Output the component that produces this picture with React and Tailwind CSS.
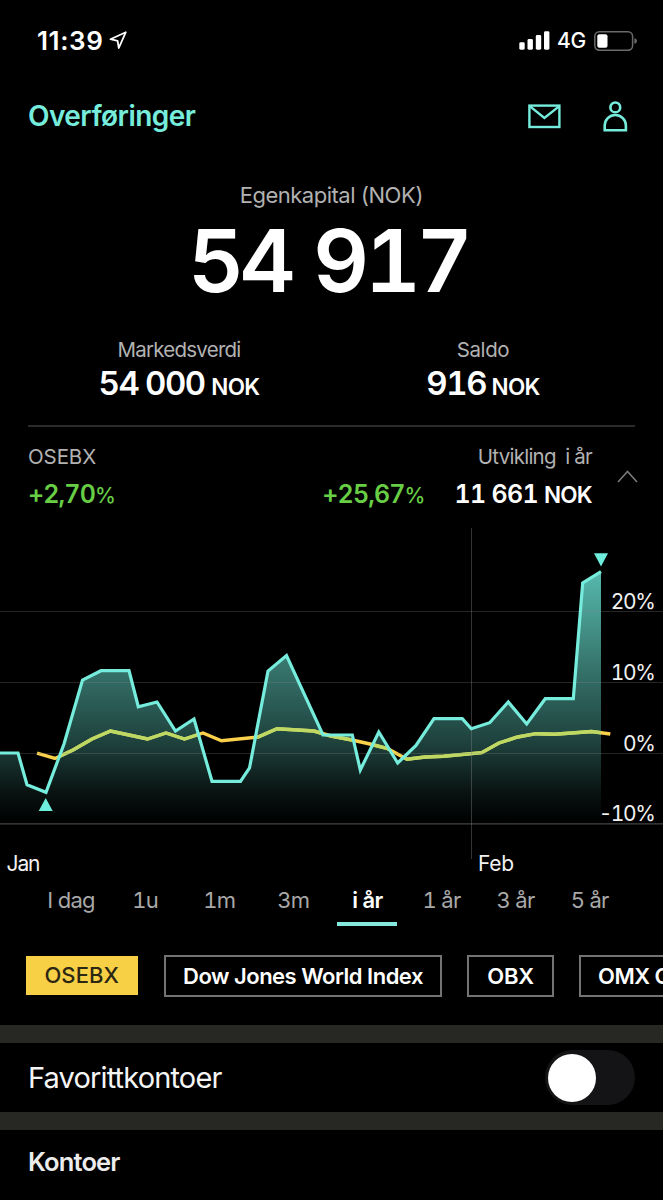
// src/App.jsx

const periods = ['I dag', '1u', '1m', '3m', 'i år', '1 år', '3 år', '5 år'];

// y = 0 is the top of the chart
const portfolio = [
  [-4, 233], [18, 233], [27, 264.7], [46, 272.3], [64, 224], [82.5, 160], [101, 150.7],
  [129, 150.7], [138.3, 186.7], [157, 182], [175.5, 211], [194, 199], [212, 261.3],
  [240.5, 261.3], [249.5, 248], [268, 151], [286.5, 135.5], [323, 215], [352.3, 215],
  [360.3, 250], [378.8, 212], [397.7, 243], [416, 225.5], [434, 198.7], [462.3, 198.7],
  [471.3, 208.7], [489.7, 202.7], [508.3, 182], [526.7, 204], [545.3, 178.7],
  [573.3, 178.7], [582.7, 63], [601, 51.7],
];

const osebx = [
  [37, 233.2], [55, 238.5], [73, 230], [92, 219], [110.5, 211], [129, 215], [147.5, 219],
  [166, 213], [184.5, 219], [203, 213], [221.5, 220.8], [258, 217], [277, 208.7],
  [314, 211], [331, 216], [352, 220], [370, 224], [387.7, 228.7], [407, 239.3],
  [425, 237], [443.7, 236.2], [481.7, 232.7], [499, 223], [517.7, 217], [536, 213.7],
  [554.7, 214.3], [591.7, 211.5], [610.3, 214],
];

const toPoints = (list) => list.map((p) => p.join(',')).join(' ');

function StatusBar() {
  return (
    <div className="flex h-[81px] items-center justify-between pl-[37px] pr-[26px]">
      <div className="flex items-center gap-[6px]">
        <span className="text-[26px] font-semibold tracking-[0.6px]">11:39</span>
        <svg width="18" height="19" viewBox="0 0 18 19" fill="none">
          <path d="M16.8 1.2 L1.4 8.2 L8.6 9.8 L9.8 17 Z" stroke="#fff" strokeWidth="1.8" strokeLinejoin="round" />
        </svg>
      </div>
      <div className="flex items-center">
        <svg width="31" height="19" viewBox="0 0 31 19" fill="#fff">
          <rect x="0.3" y="11.3" width="5.4" height="7.4" rx="1.4" />
          <rect x="8.5" y="8.1" width="5.4" height="10.6" rx="1.4" />
          <rect x="16.8" y="4.1" width="5.4" height="14.6" rx="1.4" />
          <rect x="25" y="0.2" width="5.4" height="18.5" rx="1.4" />
        </svg>
        <span className="ml-[7px] w-[30px] text-[21px] font-medium tracking-[-0.4px]">4G</span>
        <svg className="ml-[7px]" width="43" height="20" viewBox="0 0 43 20">
          <rect x="0.8" y="0.8" width="37.8" height="18.4" rx="4.6" fill="none" stroke="#6b6b6b" strokeWidth="1.5" />
          <rect x="3.3" y="3.3" width="10.2" height="13.4" rx="2" fill="#fff" />
          <path d="M40.4 7 Q43 8 43 10 Q43 12 40.4 13 Z" fill="#6b6b6b" />
        </svg>
      </div>
    </div>
  );
}

function Header() {
  return (
    <div className="flex h-[70px] items-center justify-between pl-[28px] pr-[35px] text-[#76ecdc]">
      <span className="text-[28px] font-semibold tracking-[-0.55px]">Overføringer</span>
      <div className="flex items-center gap-[42px]">
        <svg width="33" height="32" viewBox="0 0 33 32" fill="none" stroke="currentColor" strokeWidth="2.4">
          <rect x="1.4" y="5.6" width="30" height="21.4" />
          <path d="M2 6.4 L16.4 18 L31 6.4" />
        </svg>
        <svg width="25" height="32" viewBox="0 0 25 32" fill="none" stroke="currentColor" strokeWidth="2.6">
          <circle cx="12.3" cy="7.4" r="4.9" />
          <path d="M1.7 30.3 V25.6 A10.6 10.6 0 0 1 22.9 25.6 V30.3 Z" />
        </svg>
      </div>
    </div>
  );
}

function Balance() {
  return (
    <div className="flex flex-col px-[28px] [font-feature-settings:'tnum']">
      <div className="flex h-[89px] items-center justify-center text-[22px] tracking-[-0.5px] text-[#b2b2b2]">
        Egenkapital (NOK)
      </div>
      <div className="-mt-[22px] flex h-[87px] items-center justify-center pr-[7px] text-[87px] font-semibold tracking-[-4.6px] [word-spacing:3px]">
        54 917
      </div>
      <div className="mt-[29px] flex h-[93px] justify-between border-b-2 border-[#2b2b2b]">
        <div className="flex w-[302px] flex-col items-center">
          <span className="h-[31px] text-[20.5px] leading-[31px] tracking-[-0.75px] text-[#b2b2b2]">Markedsverdi</span>
          <span className="h-[36px] text-[33px] font-semibold leading-[36px] tracking-[-1.4px] [word-spacing:-1px]">
            54 000 <span className="text-[22.5px] tracking-[-0.7px]">NOK</span>
          </span>
        </div>
        <div className="flex w-[304px] flex-col items-center">
          <span className="h-[31px] text-[20.5px] leading-[31px] tracking-[-0.4px] text-[#b2b2b2]">Saldo</span>
          <span className="h-[36px] text-[33px] font-semibold leading-[36px] tracking-[-1.4px] [word-spacing:-2px]">
            916 <span className="text-[22.5px] tracking-[-0.7px]">NOK</span>
          </span>
        </div>
      </div>
    </div>
  );
}

function Development() {
  return (
    <div className="flex h-[93px] justify-between pl-[28px] pr-[25px] pt-[14px] [font-feature-settings:'tnum']">
      <div className="flex flex-col">
        <span className="h-[32px] text-[20.5px] leading-[32px] tracking-[-0.1px] text-[#b2b2b2]">OSEBX</span>
        <span className="mt-[3px] h-[36px] text-[25px] font-semibold leading-[36px] tracking-[-0.9px] text-[#68ce45]">
          +2,70<span className="text-[21px] font-medium">%</span>
        </span>
      </div>
      <div className="flex gap-[25px]">
        <div className="flex flex-col items-end">
          <span className="h-[32px] whitespace-pre text-[20.5px] leading-[32px] tracking-[-0.75px] text-[#b2b2b2]">{'Utvikling  i år'}</span>
          <div className="mt-[3px] flex h-[36px] gap-[30px] text-[25px] font-semibold leading-[36px]">
            <span className="tracking-[-0.9px] text-[#68ce45]">
              +25,67<span className="text-[21px] font-medium">%</span>
            </span>
            <span className="tracking-[-0.7px]">
              11 661 <span className="text-[22.5px]">NOK</span>
            </span>
          </div>
        </div>
        <svg className="mt-[29px]" width="21" height="13" viewBox="0 0 21 13" fill="none" stroke="#7a7a7a" strokeWidth="1.6">
          <path d="M1 12 L10.5 1.5 L20 12" />
        </svg>
      </div>
    </div>
  );
}

function Chart() {
  const areaPoints = `-4,304 ${toPoints(portfolio)} 601,304`;

  return (
    <svg className="block" width="663" height="360" viewBox="0 0 663 360" fill="none">
      <defs>
        <linearGradient id="area" gradientUnits="userSpaceOnUse" x1="0" y1="40" x2="0" y2="304">
          <stop offset="0" stopColor="#6eecdc" stopOpacity="0.82" />
          <stop offset="0.42" stopColor="#6eecdc" stopOpacity="0.48" />
          <stop offset="0.7" stopColor="#6eecdc" stopOpacity="0.27" />
          <stop offset="0.88" stopColor="#6eecdc" stopOpacity="0.08" />
          <stop offset="1" stopColor="#6eecdc" stopOpacity="0" />
        </linearGradient>
        <clipPath id="inside-area">
          <polygon points={areaPoints} />
        </clipPath>
      </defs>

      <polyline points={toPoints(osebx)} stroke="#fbd14b" strokeWidth="3.4" />
      <polygon points={areaPoints} fill="url(#area)" />
      <polyline points={toPoints(osebx)} stroke="#bfd862" strokeWidth="3.4" clipPath="url(#inside-area)" />

      <g stroke="#8a8a8a" strokeOpacity="0.27" strokeWidth="1">
        <path d="M0 91.5 H663" />
        <path d="M0 162.5 H663" />
        <path d="M0 233.5 H663" />
        <path d="M471.5 8 V339" strokeOpacity="0.38" />
        <path d="M0 303.8 H663" strokeOpacity="0.5" strokeWidth="1.3" />
      </g>

      <polyline points={toPoints(portfolio)} stroke="#76ecdc" strokeWidth="3.2" />
      <path d="M45.7 278 L52.7 291 H38.7 Z" fill="#6eecdc" />
      <path d="M601 46.5 L608 33.3 H594 Z" fill="#6eecdc" />

      <g fill="#f2f2f2" fontSize="21" textAnchor="end" letterSpacing="-1.4" className="[font-feature-settings:'tnum']">
        <text x="654.5" y="88.7">20%</text>
        <text x="654.5" y="159.7">10%</text>
        <text x="654.5" y="230.5">0%</text>
        <text x="654.5" y="301">-10%</text>
      </g>
      <g fill="#f2f2f2" fontSize="21" letterSpacing="-0.3">
        <text x="6.5" y="350.5" letterSpacing="-1.1">Jan</text>
        <text x="478" y="350.5">Feb</text>
      </g>
    </svg>
  );
}

function PeriodTabs() {
  return (
    <div className="flex h-[47px] pl-[34px]">
      {periods.map((period) => (
        <div key={period} className="flex w-[74.1px] flex-col items-center">
          <span
            className={
              period === 'i år'
                ? 'h-[42px] text-[22px] font-semibold leading-[41px] tracking-[-0.6px] text-white'
                : "h-[42px] text-[22px] leading-[41px] tracking-[-0.7px] text-[#a8a8a8] [font-feature-settings:'tnum']"
            }
          >
            {period}
          </span>
          {period === 'i år' && <div className="h-1 w-[60px] shrink-0 bg-[#84e8dc]" />}
        </div>
      ))}
    </div>
  );
}

function IndexChips() {
  return (
    <div className="flex h-[98px] items-start gap-[25px] overflow-hidden whitespace-nowrap pl-[26px] pt-[28px] text-[22px] font-semibold tracking-[-0.5px]">
      <div className="mr-[1.5px] mt-[1px] flex h-[39px] w-[111.5px] shrink-0 items-center justify-center bg-[#f7d045] font-medium tracking-[0.1px] text-[#2c2713]">
        OSEBX
      </div>
      <div className="flex h-[42px] w-[278px] shrink-0 items-center justify-center border-2 border-[#737373]">Dow Jones World Index</div>
      <div className="flex h-[42px] w-[87px] shrink-0 items-center justify-center border-2 border-[#737373] tracking-[-0.2px]">OBX</div>
      <div className="flex h-[42px] shrink-0 items-center border-2 border-[#737373] px-[17px]">OMX Copenhagen</div>
    </div>
  );
}

function App() {
  return (
    <div className="flex h-[1200px] w-[663px] flex-col overflow-hidden bg-black font-['Inter',sans-serif] text-white">
      <StatusBar />
      <Header />
      <Balance />
      <Development />
      <Chart />
      <PeriodTabs />
      <IndexChips />

      <div className="flex h-[105px] items-center justify-between border-y-[18px] border-[#272824] pl-[28px] pr-[28px]">
        <span className="text-[29px] tracking-[-0.85px] text-[#f5f5f5]">Favorittkontoer</span>
        <div className="flex h-[55px] w-[90px] items-center rounded-full bg-[#141416] pl-[3px]">
          <div className="size-[48px] rounded-full bg-white" />
        </div>
      </div>

      <div className="flex h-[64px] items-center pl-[28px] text-[25.5px] font-semibold tracking-[-0.85px] text-[#ececec]">Kontoer</div>
    </div>
  );
}

export default App;
